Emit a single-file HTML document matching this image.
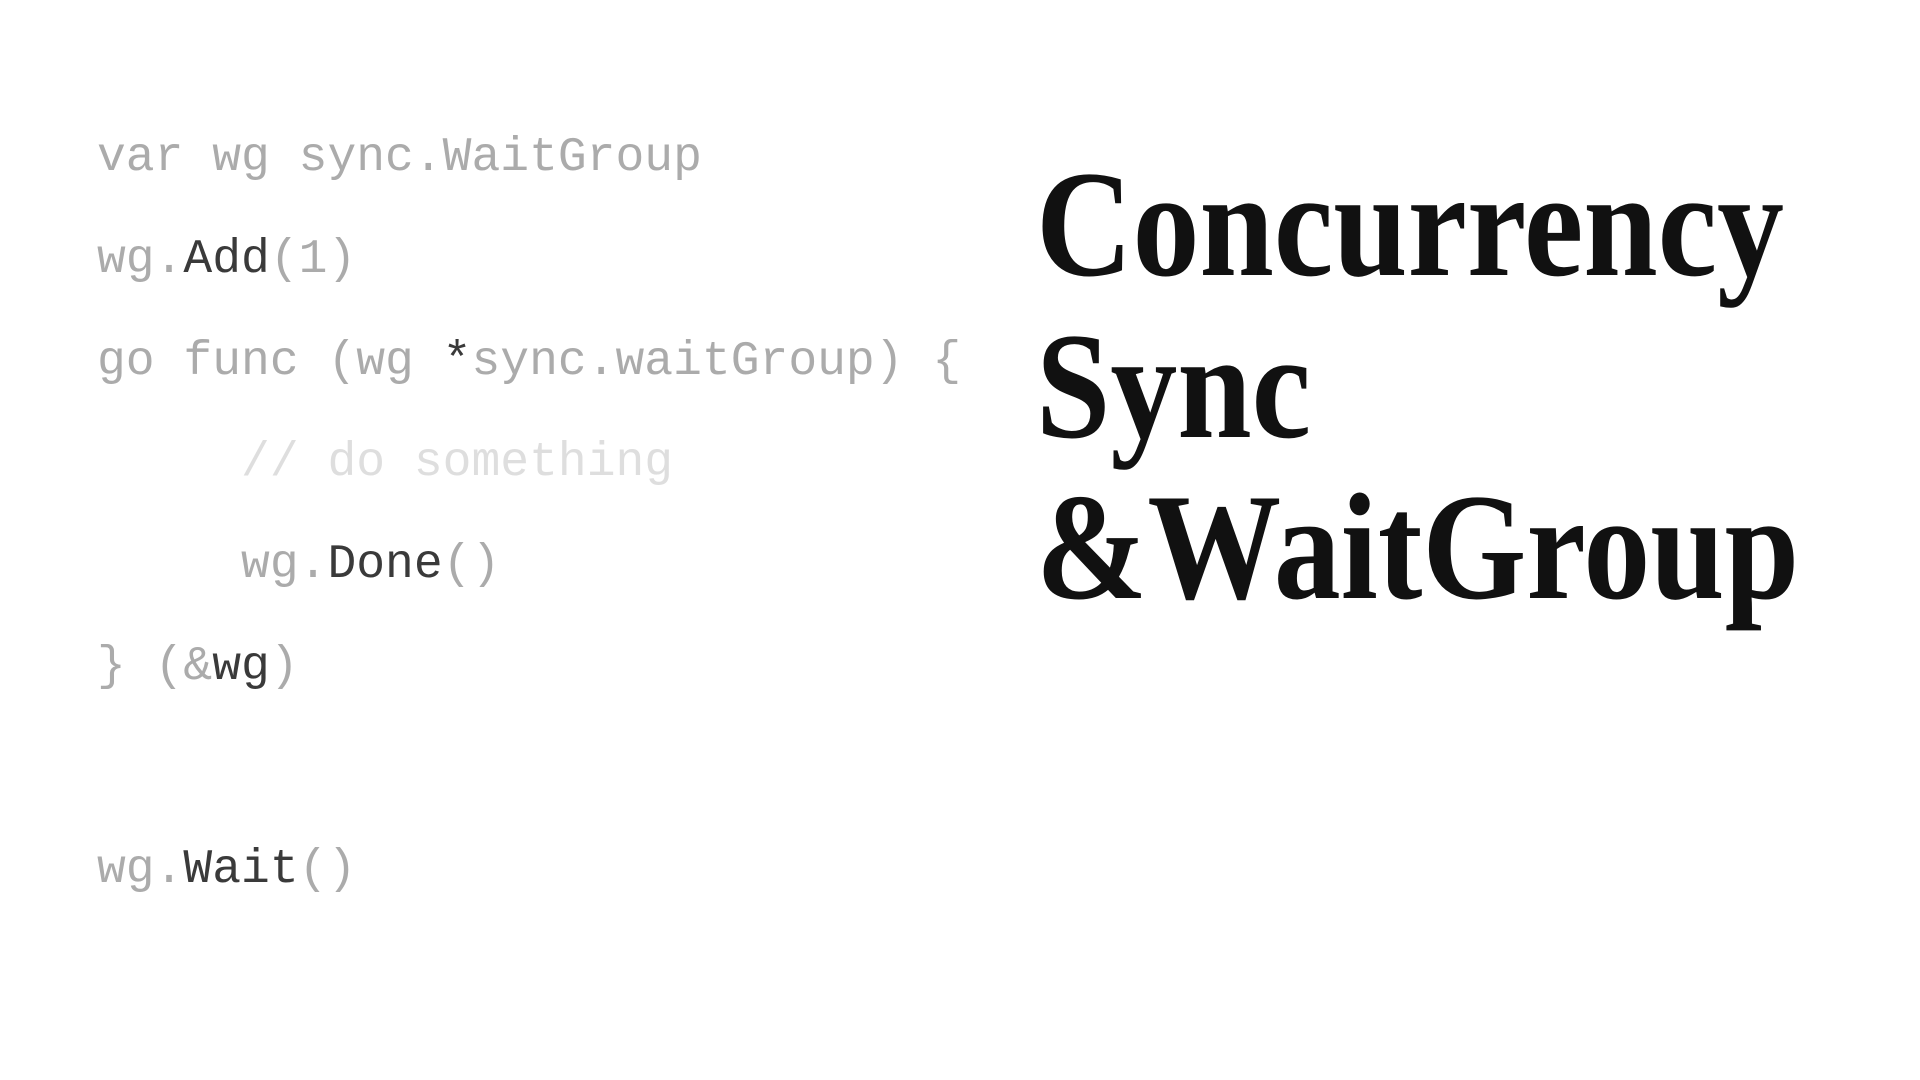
<!DOCTYPE html>
<html><head><meta charset="utf-8"><style>
html,body{margin:0;padding:0;background:#fff;width:1920px;height:1080px;overflow:hidden}
.code{position:absolute;left:97px;font-family:"Liberation Mono",monospace;font-size:48px;color:#ababab;white-space:pre;line-height:60px}
.d{color:#3a3a3a}.c{color:#dedede}
.t{position:absolute;left:1036px;font-family:"Liberation Serif",serif;font-weight:bold;font-size:152px;color:#111;white-space:pre;transform-origin:0 0;transform:scaleX(0.88);line-height:1}
</style></head><body>
<div class="code" style="top:128px">var wg sync.WaitGroup</div>
<div class="code" style="top:230px">wg.<span class="d">Add</span>(1)</div>
<div class="code" style="top:332px">go func (wg <span class="d">*</span>sync.waitGroup) {</div>
<div class="code" style="top:433px">     <span class="c">// do something</span></div>
<div class="code" style="top:535px">     wg.<span class="d">Done</span>()</div>
<div class="code" style="top:637px">} (&amp;<span class="d">wg</span>)</div>
<div class="code" style="top:840px">wg.<span class="d">Wait</span>()</div>
<div class="t" style="top:148px">Concurrency</div>
<div class="t" style="top:310px">Sync</div>
<div class="t" style="top:471px">&amp;WaitGroup</div>
</body></html>
